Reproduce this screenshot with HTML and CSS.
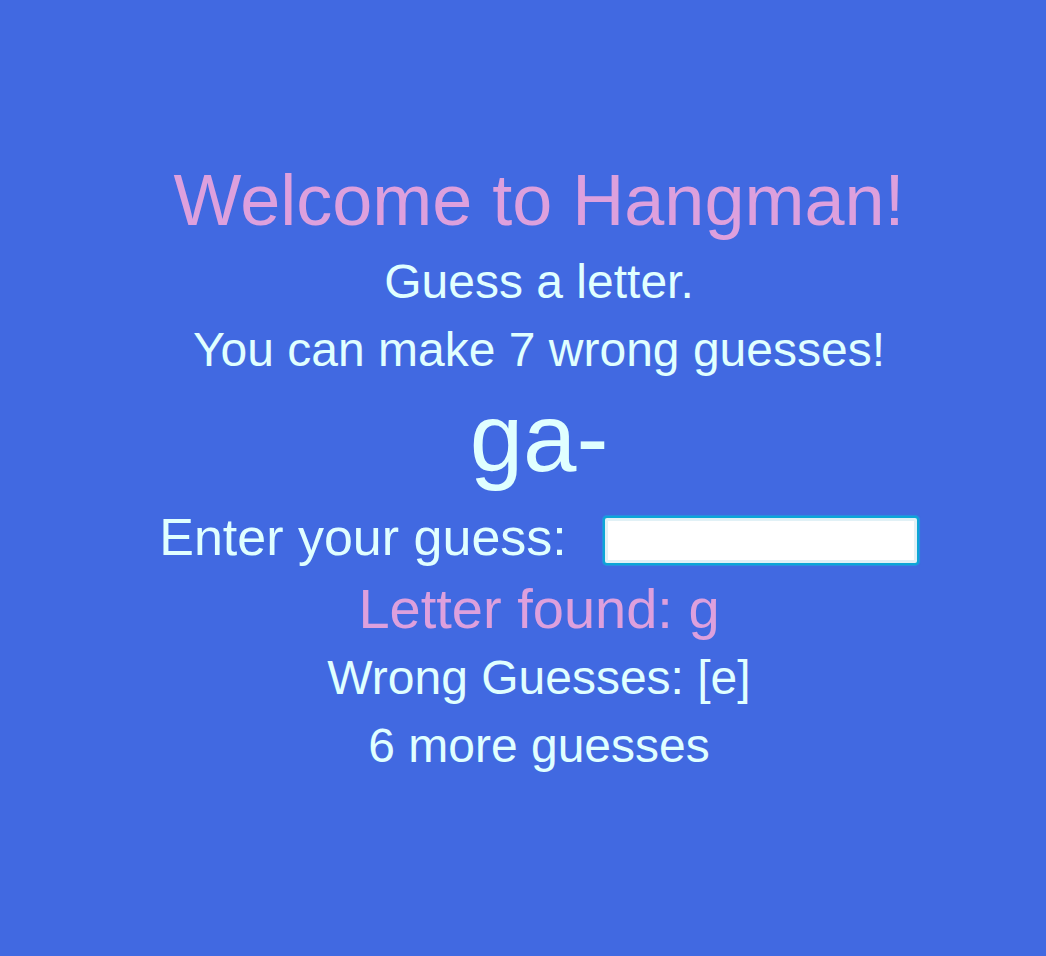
FILE: index.html
```html
<!DOCTYPE html>
<html>
<head>
<meta charset="utf-8">
<link rel="stylesheet" href="styles.css">
</head>
<body>
<main class="game">
  <h1 class="title">Welcome to Hangman!</h1>
  <p class="line first">Guess a letter.</p>
  <p class="line">You can make 7 wrong guesses!</p>
  <p class="word">ga-</p>
  <div class="guess-row">
    <label class="label" for="guess">Enter your guess:</label>
    <input id="guess" class="guess-input" type="text">
  </div>
  <p class="found">Letter found: g</p>
  <p class="line">Wrong Guesses: [e]</p>
  <p class="line">6 more guesses</p>
</main>
</body>
</html>
```
FILE: styles.css
```css
html, body {
  margin: 0;
  padding: 0;
  background: #4169e1;
  height: 100%;
}
body {
  font-family: "Liberation Sans", Arial, sans-serif;
  color: #e0ffff;
}
.game {
  display: flex;
  flex-direction: column;
  align-items: center;
  padding-top: 160px;
  padding-left: 32px;
}
.title {
  margin: 0;
  font-weight: normal;
  font-size: 72px;
  line-height: 80px;
  color: #dda0dd;
}
.line {
  margin: 0;
  font-size: 48px;
  line-height: 68px;
}
.first {
  margin-top: 8px;
}
.word {
  margin: 4px 0 0;
  font-size: 96px;
  line-height: 100px;
}
.guess-row {
  margin-top: 15px;
  display: flex;
  align-items: center;
  gap: 36px;
}
.label {
  font-size: 52px;
  line-height: 68px;
}
.guess-input {
  width: 316px;
  height: 49px;
  margin-top: 6px;
  box-sizing: border-box;
  border: 2px solid #0ca6d6;
  border-radius: 4px;
  background: #fff;
  box-shadow: inset 0 0 0 3px #e1f1f6, 0 0 1px 1px rgba(20, 180, 230, 0.5);
  outline: none;
}
.found {
  margin: 3px 0 0;
  font-size: 56px;
  line-height: 70px;
  color: #dda0dd;
}
```
